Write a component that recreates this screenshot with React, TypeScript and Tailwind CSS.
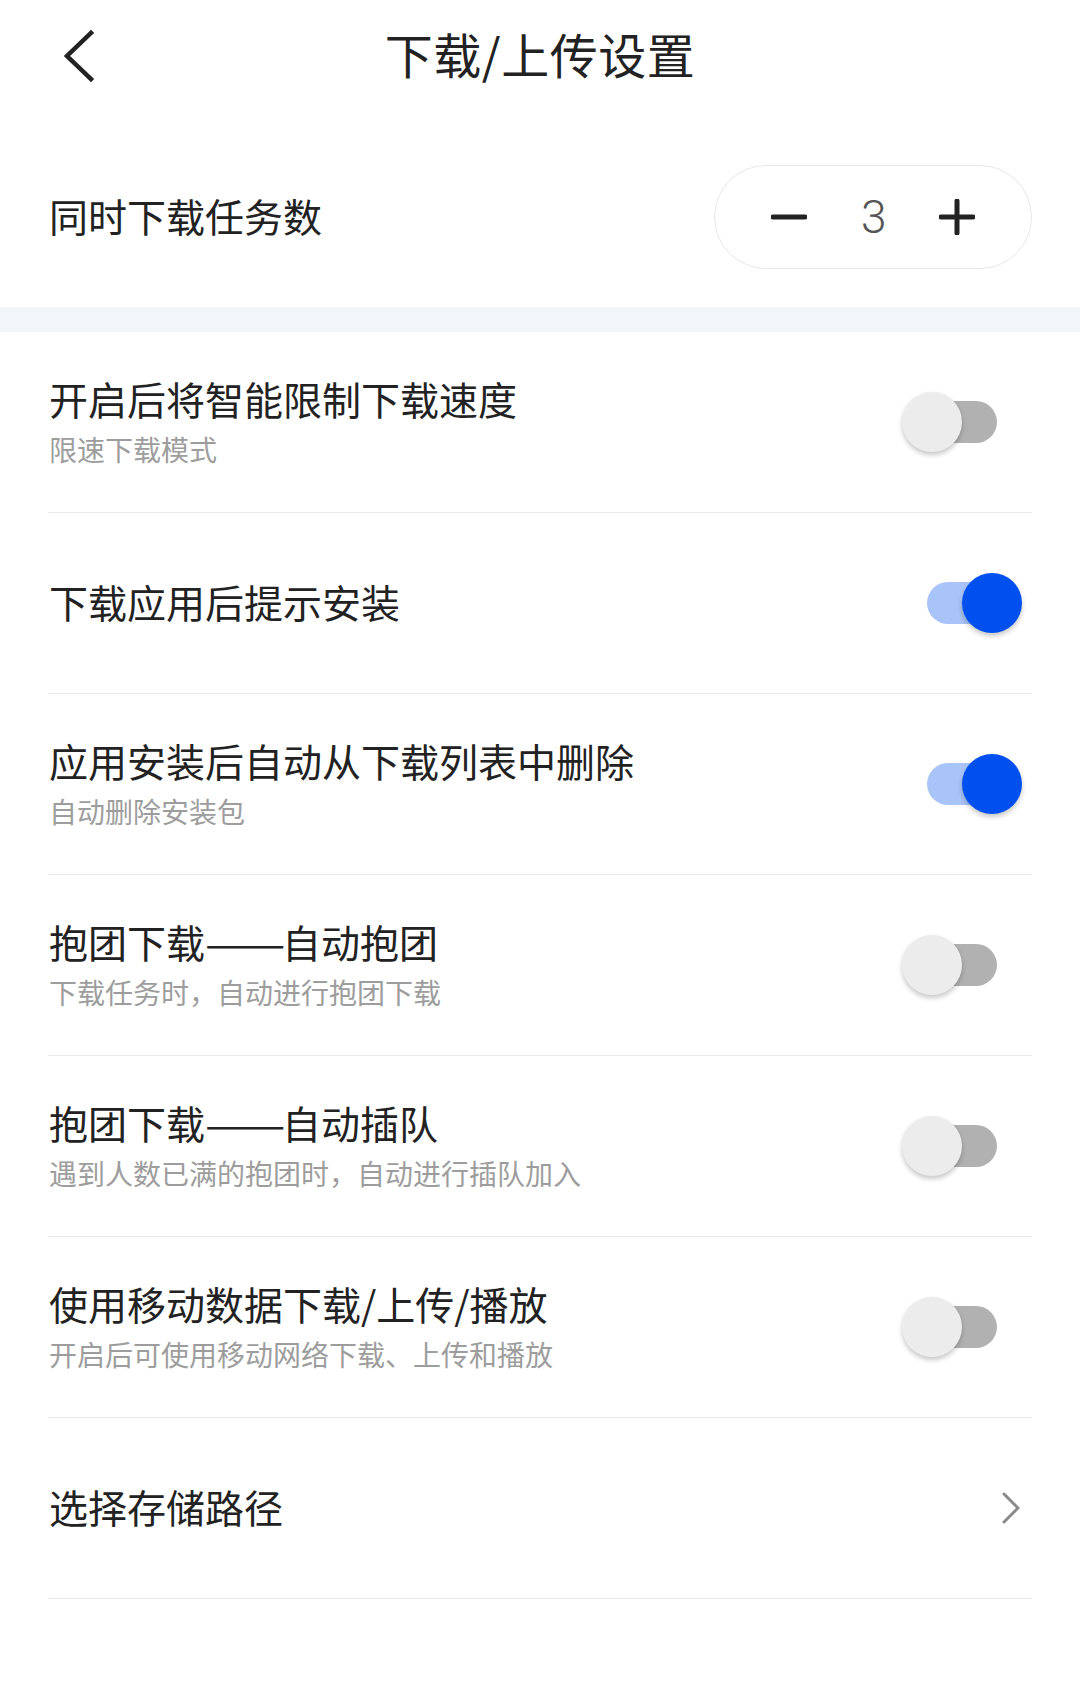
import { useState } from 'react'

const cjk = "font-['Noto_Sans_CJK_SC','Noto_Sans',sans-serif]"

type Item = {
  id: string
  title: string
  desc?: string
  on?: boolean
  link?: boolean
}

const items: Item[] = [
  { id: 'limit', title: '开启后将智能限制下载速度', desc: '限速下载模式', on: false },
  { id: 'install', title: '下载应用后提示安装', on: true },
  { id: 'remove', title: '应用安装后自动从下载列表中删除', desc: '自动删除安装包', on: true },
  { id: 'group', title: '抱团下载——自动抱团', desc: '下载任务时，自动进行抱团下载', on: false },
  { id: 'queue', title: '抱团下载——自动插队', desc: '遇到人数已满的抱团时，自动进行插队加入', on: false },
  { id: 'mobile', title: '使用移动数据下载/上传/播放', desc: '开启后可使用移动网络下载、上传和播放', on: false },
  { id: 'path', title: '选择存储路径', link: true },
]

// the em dashes in the reference run a bit wider than the font's
function Title({ text }: { text: string }) {
  const parts = text.split('——')
  if (parts.length === 1) return <>{text}</>
  return (
    <>
      {parts[0]}
      <span className="inline-block w-[77px]">
        <span className="inline-block origin-left scale-x-[1.23]">——</span>
      </span>
      {parts[1]}
    </>
  )
}

function Toggle({ on, onClick }: { on: boolean; onClick: () => void }) {
  return (
    <button onClick={onClick} className="relative h-[60px] w-[120px] shrink-0">
      <span
        className={`absolute left-[25px] top-[9px] h-[42px] w-[70px] rounded-full ${on ? 'bg-[#a9c4f9]' : 'bg-[#b1b1b1]'}`}
      />
      <span
        className={`absolute top-0 h-[60px] w-[60px] rounded-full shadow-[0_3px_5px_rgba(0,0,0,0.22)] ${
          on ? 'left-[60px] bg-[#0050ef]' : 'left-0 bg-[#ececec]'
        }`}
      />
    </button>
  )
}

export default function App() {
  const [count, setCount] = useState(3)
  const [state, setState] = useState<Record<string, boolean>>(() =>
    Object.fromEntries(items.map((i) => [i.id, !!i.on]))
  )

  return (
    <div className={`min-h-[1691px] w-[1080px] bg-white text-[#222] ${cjk}`}>
      {/* Header */}
      <div className="relative flex h-[112px] items-center justify-center pb-[6px]">
        <button className="absolute left-[62px] top-[28px] flex h-[56px] w-[36px] items-center">
          <svg width="34" height="56" viewBox="0 0 34 56" fill="none">
            <path d="M29 5 L5 28 L29 51" stroke="#222" strokeWidth="4.5" strokeLinecap="square" />
          </svg>
        </button>
        <h1 className="text-[48px] leading-none tracking-[0.5px]">下载/上传设置</h1>
      </div>

      {/* Concurrent tasks */}
      <div className="flex items-center justify-between pb-[38px] pl-[49px] pr-[48px] pt-[53px]">
        <span className="pb-[4px] text-[39px] leading-[46px]">同时下载任务数</span>
        <div className="flex h-[104px] w-[318px] items-center rounded-full border border-[#e7e7e7]">
          <button
            onClick={() => setCount((c) => Math.max(1, c - 1))}
            className="ml-[56px] flex h-[36px] w-[36px] items-center justify-center"
          >
            <svg width="36" height="36" viewBox="0 0 36 36">
              <path d="M2 18 H34" stroke="#222" strokeWidth="5" strokeLinecap="round" />
            </svg>
          </button>
          <span className="ml-[54px] w-[22px] text-center font-['Roboto',sans-serif] text-[46px] font-light leading-none text-[#555]">
            {count}
          </span>
          <button
            onClick={() => setCount((c) => c + 1)}
            className="ml-[56px] flex h-[36px] w-[36px] items-center justify-center"
          >
            <svg width="36" height="36" viewBox="0 0 36 36">
              <path d="M2 18 H34 M18 2 V34" stroke="#222" strokeWidth="5" strokeLinecap="round" />
            </svg>
          </button>
        </div>
      </div>

      <div className="h-[25px] bg-[#f3f6f8]" />

      {/* Settings list */}
      <div className="mx-[48px]">
        {items.map((item) => (
          <div
            key={item.id}
            className="flex h-[181px] items-center justify-between border-b border-[#ececec] pl-[1px]"
          >
            <div className="flex flex-col pb-[5px]">
              <span className="text-[39px] leading-[46px]">
                <Title text={item.title} />
              </span>
              {item.desc && (
                <span className="mt-[12px] text-[28px] leading-[32px] text-[#9d9d9d]">{item.desc}</span>
              )}
            </div>
            {item.link ? (
              <svg className="mr-[12px]" width="18" height="32" viewBox="0 0 18 32" fill="none">
                <path d="M2 2 L16 16 L2 30" stroke="#8a8a8a" strokeWidth="3" strokeLinecap="round" />
              </svg>
            ) : (
              <div className="mr-[10px] pt-[4px]">
                <Toggle
                  on={state[item.id]}
                  onClick={() => setState((s) => ({ ...s, [item.id]: !s[item.id] }))}
                />
              </div>
            )}
          </div>
        ))}
      </div>
    </div>
  )
}
